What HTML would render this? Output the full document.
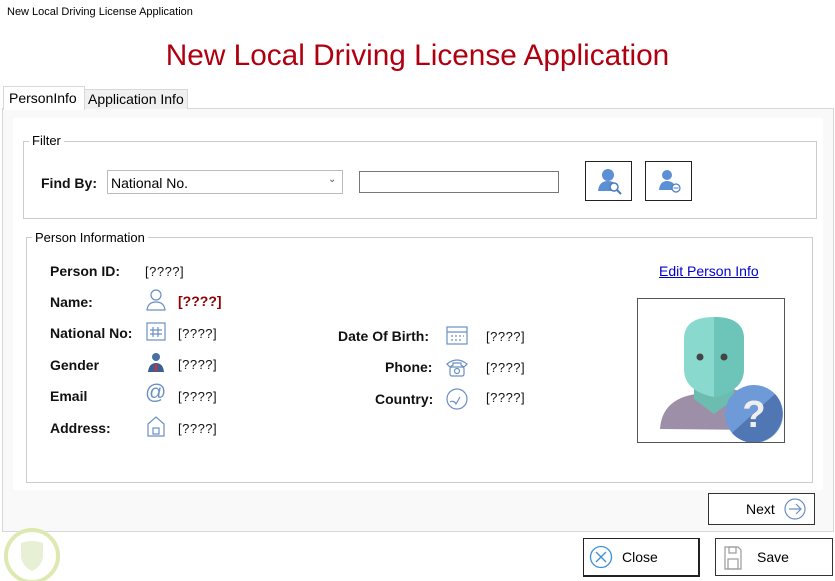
<!DOCTYPE html>
<html><head><style>
body{margin:0;width:835px;height:581px;background:#fff;font-family:"Liberation Sans",sans-serif;position:relative;overflow:hidden}
.a{position:absolute}
.lbl{font-weight:bold;font-size:14px;color:#111}
.v{font-size:13px;color:#111}
</style></head><body>
<div class="a" style="left:7px;top:6px;font-size:11px;color:#000">New Local Driving License Application</div>
<div class="a" style="left:0;width:835px;top:39px;text-align:center;font-size:29.8px;color:#b00010">New Local Driving License Application</div>
<!-- tab page -->
<div class="a" style="left:2px;top:108px;width:830px;height:422px;border:1px solid #d8d8d8;background:#f9f9f9"></div>
<div class="a" style="left:3px;top:86px;width:80px;height:23px;background:#fff;border:1px solid #d8d8d8;border-bottom:none"></div>
<div class="a" style="left:9px;top:90px;font-size:14px">PersonInfo</div>
<div class="a" style="left:84px;top:89px;width:102px;height:19px;background:#f0f0f0;border:1px solid #d8d8d8;border-bottom:none"></div>
<div class="a" style="left:88px;top:91px;font-size:14px">Application Info</div>
<div class="a" style="left:13px;top:118px;width:810px;height:372px;background:#fff"></div>
<!-- filter -->
<div class="a" style="left:23px;top:141px;width:792px;height:76px;border:1px solid #ccc"></div>
<div class="a" style="left:29px;top:133px;background:#fff;padding:0 3px;font-size:13px">Filter</div>
<div class="a lbl" style="left:41px;top:175px">Find By:</div>
<div class="a" style="left:107px;top:170px;width:234px;height:22px;border:1px solid #bbb;background:#fff"></div>
<div class="a" style="left:111px;top:175px;font-size:14px">National No.</div>
<div class="a" style="left:328px;top:174px;font-size:10px;color:#555">⌄</div>
<div class="a" style="left:359px;top:171px;width:198px;height:20px;border:1px solid #777;background:#fff"></div>
<div class="a" style="left:585px;top:161px;width:45px;height:38px;border:1px solid #222;background:#fff">
<svg width="45" height="38"><circle cx="22" cy="13" r="6" fill="#5b8fd6"/><path d="M12 29 q1-10 10-10 q6 0 8 4 v6z" fill="#5b8fd6"/><circle cx="28" cy="25" r="4" fill="#fff" stroke="#4a7cc0" stroke-width="1.5"/><line x1="31" y1="28" x2="35" y2="32" stroke="#4a7cc0" stroke-width="2"/></svg></div>
<div class="a" style="left:645px;top:161px;width:45px;height:38px;border:1px solid #222;background:#fff">
<svg width="45" height="38"><circle cx="21" cy="13" r="5" fill="#5b8fd6"/><path d="M13 28 q1-9 8-9 q6 0 8 5 v4z" fill="#5b8fd6"/><circle cx="30" cy="26" r="4" fill="#fff" stroke="#4a7cc0" stroke-width="1.2"/><line x1="27.5" y1="26" x2="32.5" y2="26" stroke="#4a7cc0"/></svg></div>
<!-- person info -->
<div class="a" style="left:26px;top:237px;width:785px;height:244px;border:1px solid #ccc"></div>
<div class="a" style="left:32px;top:230px;background:#fff;padding:0 3px;font-size:13px">Person Information</div>
<div class="a lbl" style="left:50px;top:263px">Person ID:</div><div class="a v" style="left:145px;top:264px;letter-spacing:0.5px">[????]</div>
<div class="a lbl" style="left:50px;top:294px">Name:</div><div class="a v" style="left:178px;top:293px;color:#8b0000;font-weight:bold;font-size:14px">[????]</div>
<div class="a lbl" style="left:50px;top:325px">National No:</div><div class="a v" style="left:178px;top:326px;letter-spacing:0.5px">[????]</div>
<div class="a lbl" style="left:50px;top:357px">Gender</div><div class="a v" style="left:178px;top:357px;letter-spacing:0.5px">[????]</div>
<div class="a lbl" style="left:50px;top:388px">Email</div><div class="a v" style="left:178px;top:389px;letter-spacing:0.5px">[????]</div>
<div class="a lbl" style="left:50px;top:420px">Address:</div><div class="a v" style="left:178px;top:421px;letter-spacing:0.5px">[????]</div>
<svg class="a" style="left:145px;top:288px" width="22" height="24" fill="none" stroke="#6a8fc4" stroke-width="1.2"><circle cx="11" cy="7" r="5"/><path d="M2 22 q1-8 9-8 q8 0 9 8z"/></svg>
<svg class="a" style="left:145px;top:321px" width="22" height="22" fill="none" stroke="#6a8fc4" stroke-width="1.2"><rect x="2" y="2" width="18" height="17"/><path d="M8 6v10M13 6v10M5 9h12M5 13h12"/></svg>
<svg class="a" style="left:145px;top:351px" width="22" height="22"><circle cx="11" cy="6" r="4" fill="#4a6fa5"/><path d="M3 21q1-9 8-9t8 9z" fill="#3a5f95"/><path d="M10 13h2l0.5 7h-3z" fill="#c33"/></svg>
<div class="a" style="left:145px;top:381px;font-size:21px;color:#6a8fc4">@</div>
<svg class="a" style="left:145px;top:414px" width="22" height="24" fill="none" stroke="#6a8fc4" stroke-width="1.2"><path d="M3 22V10l8-7 8 7v12z"/><rect x="8" y="14" width="6" height="6"/></svg>
<div class="a lbl" style="left:338px;top:328px">Date Of Birth:</div><div class="a v" style="left:486px;top:329px;letter-spacing:0.5px">[????]</div>
<div class="a lbl" style="left:385px;top:359px">Phone:</div><div class="a v" style="left:486px;top:360px;letter-spacing:0.5px">[????]</div>
<div class="a lbl" style="left:375px;top:391px">Country:</div><div class="a v" style="left:486px;top:390px;letter-spacing:0.5px">[????]</div>
<svg class="a" style="left:445px;top:324px" width="24" height="22" fill="none" stroke="#6a8fc4" stroke-width="1.2"><rect x="2" y="3" width="20" height="17"/><path d="M2 8h20M6 12h2M10 12h2M14 12h2M18 12h1M6 16h2M10 16h2M14 16h2"/></svg>
<svg class="a" style="left:445px;top:355px" width="24" height="24" fill="none" stroke="#6a8fc4" stroke-width="1.2"><path d="M2 9q10-8 20 0l-3 3-3-2v-2h-8v2l-3 2z"/><rect x="5" y="12" width="14" height="9" rx="2"/><circle cx="12" cy="16" r="2.5"/></svg>
<svg class="a" style="left:445px;top:387px" width="24" height="24" fill="none" stroke="#6a8fc4" stroke-width="1.2"><circle cx="12" cy="12" r="10"/><path d="M5 15q4-2 6 2l4-7"/></svg>
<div class="a" style="left:659px;top:263px;font-size:14px;color:#0000cc;text-decoration:underline">Edit Person Info</div>
<div class="a" style="left:637px;top:298px;width:146px;height:143px;border:1px solid #555;background:#fff;overflow:hidden">
<svg width="146" height="143"><path d="M22 130 q2-30 36-35 l18-12 22 8 q20 6 28 20 v20z" fill="#9e8fa8"/><path d="M56 100 v-25 h40 v25 l-20 15z" fill="#6cbcb0"/><path d="M46 40 q0-22 30-22 q30 0 30 22 v30 q0 22-30 28 q-30-6-30-28z" fill="#8ad9cf"/><path d="M76 18 q30 0 30 22 v30 q0 22-30 28z" fill="#6cc5b8"/><circle cx="62" cy="58" r="3.5" fill="#444"/><circle cx="86" cy="58" r="3.5" fill="#444"/><circle cx="116" cy="115" r="29" fill="#6f9ad8"/><path d="M137 95 a29 29 0 0 1 -43 39z" fill="#5077b3"/><text x="116" y="128" font-size="38" font-weight="bold" fill="#eee" text-anchor="middle" font-family="Liberation Sans">?</text></svg></div>
<!-- buttons -->
<div class="a" style="left:708px;top:493px;width:105px;height:30px;border:1px solid #333;background:#fff"></div>
<div class="a" style="left:746px;top:501px;font-size:14px">Next</div>
<svg class="a" style="left:783px;top:497px" width="24" height="24" fill="none" stroke="#6a8fc4" stroke-width="1.2"><circle cx="12" cy="12" r="10"/><path d="M6 12h11M13 7l5 5-5 5"/></svg>
<div class="a" style="left:583px;top:538px;width:114px;height:36px;border:1px solid #222;border-right-width:2px;border-bottom-width:2px;background:#fff"></div>
<svg class="a" style="left:589px;top:545px" width="24" height="24" fill="none" stroke="#3c8ed6" stroke-width="1.3"><circle cx="12" cy="12" r="10.5"/><path d="M7 7l10 10M17 7l-10 10"/></svg>
<div class="a" style="left:622px;top:549px;font-size:14px">Close</div>
<div class="a" style="left:715px;top:538px;width:116px;height:36px;border:1px solid #333;background:#fff"></div>
<svg class="a" style="left:723px;top:545px" width="20" height="26" fill="none" stroke="#999" stroke-width="1.2"><path d="M2 2h13l3 3v19H2z"/><rect x="6" y="2" width="7" height="6"/><rect x="5" y="14" width="10" height="10"/></svg>
<div class="a" style="left:757px;top:549px;font-size:14px">Save</div>
<svg class="a" style="left:3px;top:527px" width="58" height="54"><circle cx="29" cy="29" r="26" fill="none" stroke="#dde9b0" stroke-width="4"/><path d="M18 16q11-4 22 0v14q-2 10-11 14q-9-4-11-14z" fill="#e7efd4"/></svg>
</body></html>
